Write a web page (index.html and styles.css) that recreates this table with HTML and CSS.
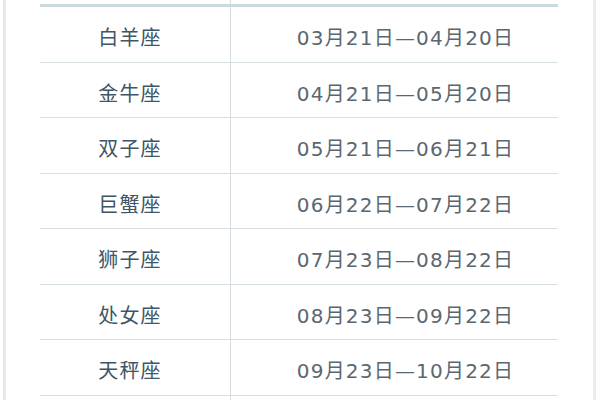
FILE: index.html
```html
<!DOCTYPE html>
<html lang="zh-CN">
<head>
<meta charset="utf-8">
<link rel="stylesheet" href="styles.css">
</head>
<body>
<div class="frame">
  <div class="zodiac-table">
    <div class="head name"></div><div class="head date"></div>
    <div class="cell name">白羊座</div><div class="cell date">03月21日—04月20日</div>
    <div class="cell name">金牛座</div><div class="cell date">04月21日—05月20日</div>
    <div class="cell name">双子座</div><div class="cell date">05月21日—06月21日</div>
    <div class="cell name">巨蟹座</div><div class="cell date">06月22日—07月22日</div>
    <div class="cell name">狮子座</div><div class="cell date">07月23日—08月22日</div>
    <div class="cell name">处女座</div><div class="cell date">08月23日—09月22日</div>
    <div class="cell name">天秤座</div><div class="cell date">09月23日—10月22日</div>
    <div class="tail name"></div><div class="tail date"></div>
  </div>
</div>
</body>
</html>
```

FILE: styles.css
```css
html, body {
  margin: 0;
  padding: 0;
  background: #ffffff;
}
body {
  width: 600px;
  height: 400px;
  overflow: hidden;
}
.frame {
  margin-left: 3px;
  width: 593px;
  height: 400px;
  border-left: 3px solid #e8e8e8;
  border-right: 3px solid #ececec;
  padding-left: 34px;
  box-sizing: border-box;
}
.zodiac-table {
  width: 518px;
  display: grid;
  grid-template-columns: 191px 327px;
  grid-template-rows: 7px repeat(7, 55.5px) 5px;
  font-family: "DejaVu Sans", "Noto Sans CJK SC", sans-serif;
  font-size: 20px;
  letter-spacing: 1.2px;
}
.head {
  border-bottom: 3px solid #cbdade;
  box-sizing: border-box;
}
.cell {
  border-bottom: 1px solid #d6dfe2;
  box-sizing: border-box;
  display: flex;
  align-items: center;
  justify-content: center;
  padding-top: 5px;
}
.name {
  border-right: 1px solid #d3dce0;
  color: #3e5666;
  padding-right: 10px;
}
.date {
  color: #5b6770;
  padding-left: 22px;
}
```
